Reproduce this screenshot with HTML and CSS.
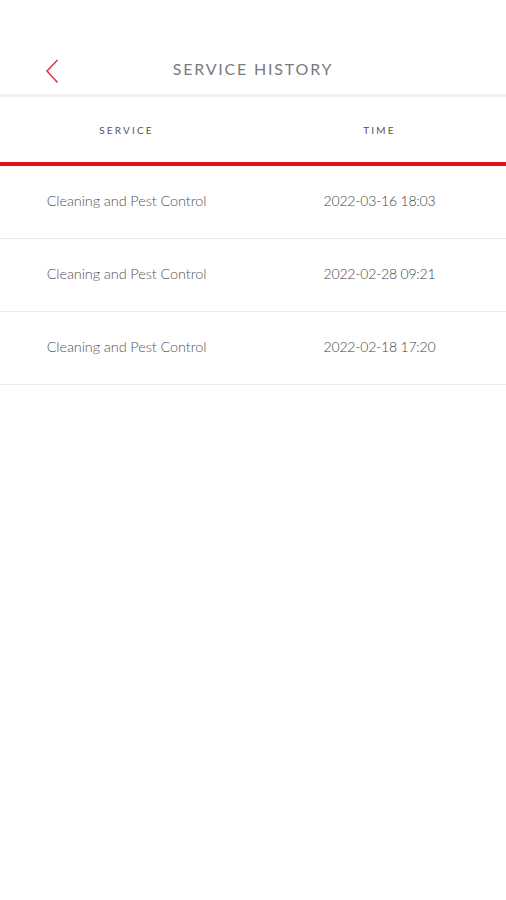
FILE: index.html
```html
<!DOCTYPE html>
<html>
<head>
<meta charset="utf-8">
<link rel="stylesheet" href="styles.css">
</head>
<body>
<div class="page">
  <header class="topbar">
    <span class="back">
      <svg width="16" height="26" viewBox="0 0 16 26"><polyline points="13.5,2 3,13 13.5,24.5" fill="none" stroke="#e0303a" stroke-width="1.5" stroke-linejoin="miter"/></svg>
    </span>
    <h1 class="title">SERVICE HISTORY</h1>
  </header>
  <div class="thead">
    <div class="th">SERVICE</div>
    <div class="th">TIME</div>
  </div>
  <div class="row"><div class="cell">Cleaning and Pest Control</div><div class="cell time">2022-03-16 18:03</div></div>
  <div class="row"><div class="cell">Cleaning and Pest Control</div><div class="cell time">2022-02-28 09:21</div></div>
  <div class="row"><div class="cell">Cleaning and Pest Control</div><div class="cell time">2022-02-18 17:20</div></div>
</div>
</body>
</html>
```
FILE: styles.css
```css
html, body { margin: 0; padding: 0; background: #fff; }
body { font-family: "Lato", "Open Sans", sans-serif; width: 506px; }
.page { width: 506px; }
.topbar {
  position: relative;
  height: 97px;
  padding-top: 42px;
  box-sizing: border-box;
  display: flex;
  align-items: center;
  justify-content: center;
  border-bottom: 3px solid #f0f0f0;
}
.back {
  position: absolute;
  left: 44px;
  top: 58px;
  display: flex;
}
.title {
  margin: 0;
  font-size: 16px;
  font-weight: 400;
  letter-spacing: 1.8px;
  color: #7a7a7a;
}
.thead {
  display: grid;
  grid-template-columns: 1fr 1fr;
  height: 65px;
  padding-top: 1px;
  box-sizing: border-box;
  align-items: center;
  border-bottom: 4px solid #e2141a;
  margin-bottom: 4px;
  border-bottom-width: 0;
  box-shadow: 0 4px 0 #e2141a;
}
.th {
  text-align: center;
  font-size: 10px;
  letter-spacing: 2.2px;
  color: #555;
}
.row {
  display: grid;
  grid-template-columns: 1fr 1fr;
  height: 73px;
  padding-bottom: 3px;
  box-sizing: border-box;
  align-items: center;
  border-bottom: 1px solid #ebebeb;
}
.cell {
  text-align: center;
  font-size: 14.5px;
  font-weight: 300;
  color: #555;
  letter-spacing: -0.1px;
}
.cell.time { color: #444; font-size: 14px; letter-spacing: -0.2px; }
```
